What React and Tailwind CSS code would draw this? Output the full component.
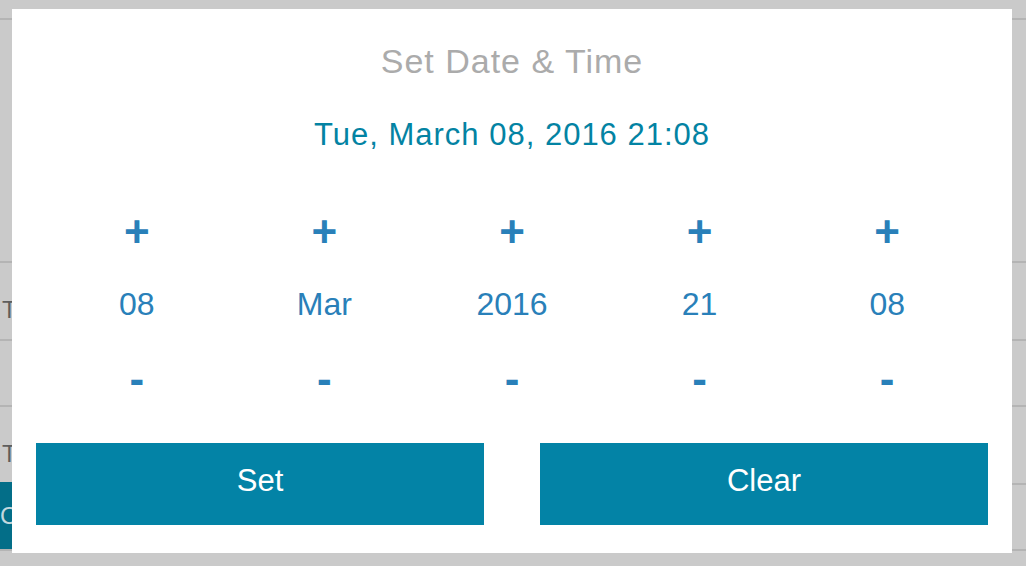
import React, { useState } from 'react';

const months = ["Jan", "Feb", "Mar", "Apr", "May", "Jun", "Jul", "Aug", "Sep", "Oct", "Nov", "Dec"];
const longMonths = ["January", "February", "March", "April", "May", "June", "July", "August", "September", "October", "November", "December"];
const days = ["Sun", "Mon", "Tue", "Wed", "Thu", "Fri", "Sat"];

const pad = (n) => String(n).padStart(2, "0");

const Stepper = ({ value, onUp, onDown }) => (
  <div className="flex flex-col items-center">
    <button
      className="text-[44px] leading-[44px] font-bold text-[#2980b9] focus:outline-none"
      onClick={onUp}
    >
      +
    </button>
    <div className="mt-[30px] text-[32px] leading-[40px] text-[#2980b9]">{value}</div>
    <button
      className="mt-[33px] text-[44px] leading-[44px] font-bold text-[#2980b9] focus:outline-none"
      onClick={onDown}
    >
      -
    </button>
  </div>
);

const App = () => {
  const [date, setDate] = useState(new Date(2016, 2, 8, 21, 8));

  const shift = (field, amount) => {
    const d = new Date(date);
    if (field === "day") d.setDate(d.getDate() + amount);
    if (field === "month") d.setMonth(d.getMonth() + amount);
    if (field === "year") d.setFullYear(d.getFullYear() + amount);
    if (field === "hour") d.setHours(d.getHours() + amount);
    if (field === "minute") d.setMinutes(d.getMinutes() + amount);
    setDate(d);
  };

  const label = `${days[date.getDay()]}, ${longMonths[date.getMonth()]} ${pad(date.getDate())}, ${date.getFullYear()} ${pad(date.getHours())}:${pad(date.getMinutes())}`;

  const fields = [
    { key: "day", value: pad(date.getDate()) },
    { key: "month", value: months[date.getMonth()] },
    { key: "year", value: date.getFullYear() },
    { key: "hour", value: pad(date.getHours()) },
    { key: "minute", value: pad(date.getMinutes()) },
  ];

  return (
    <div className="relative h-[566px] w-full overflow-hidden bg-[#cacaca] font-['Liberation_Sans',Arial,sans-serif]">
      {/* page behind the dialog */}
      <div className="flex flex-col">
        <div className="h-[20px] border-b-2 border-[#b4b4b4]"></div>
        <div className="h-[243px] border-b-2 border-[#b4b4b4]"></div>
        <div className="flex h-[78px] items-end border-b-2 border-[#b4b4b4] pb-[15px] pl-[2px] text-[24px] leading-[28px] text-[#5e5e5e]">
          Time
        </div>
        <div className="h-[66px] border-b-2 border-[#b4b4b4]"></div>
        <div className="flex h-[78px] items-end border-b-2 border-[#b4b4b4] pb-[15px] pl-[2px] text-[24px] leading-[28px] text-[#5e5e5e]">
          Time
        </div>
        <div className="-mt-[3px] flex h-[69px] border-b-2 border-[#b4b4b4]">
          <div className="flex w-[300px] items-center bg-[#036e88] text-[24px] text-[#c4d8de]">
            Cancel
          </div>
        </div>
      </div>

      {/* dialog */}
      <div className="absolute left-[12px] top-[9px] flex h-[544px] w-[1000px] flex-col bg-white px-6">
        <h2 className="mt-[32px] text-center text-[34px] leading-[40px] tracking-[1px] text-[#ababab]">Set Date &amp; Time</h2>
        <div className="mt-[36px] text-center text-[31px] leading-[36px] tracking-[1px] text-[#0383a3]">{label}</div>
        <div className="mx-auto mt-[57px] grid w-[938px] grid-cols-5">
          {fields.map((f) => (
            <Stepper
              key={f.key}
              value={f.value}
              onUp={() => shift(f.key, 1)}
              onDown={() => shift(f.key, -1)}
            />
          ))}
        </div>
        <div className="mt-[42px] flex gap-[56px]">
          <button className="h-[82px] flex-1 bg-[#0383a6] pb-[6px] text-[31px] text-white focus:outline-none">Set</button>
          <button className="h-[82px] flex-1 bg-[#0383a6] pb-[6px] text-[31px] text-white focus:outline-none">Clear</button>
        </div>
      </div>
    </div>
  );
};

export default App;
